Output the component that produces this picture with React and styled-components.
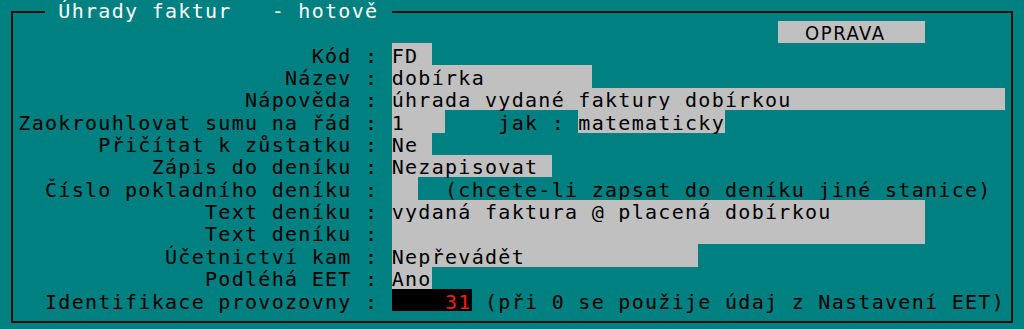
import React from "react";
import styled, { createGlobalStyle } from "styled-components";

// textová obrazovka: mřížka znaků
const CW = 40 / 3;
const RH = 22.36;
const ORIGIN = 5; // x levého okraje sloupce 0
const INNER = 13; // x vnitřní hrany rámu
const cols = (n) => `${n * CW}px`;

const Global = createGlobalStyle`
  html, body {
    margin: 0;
    padding: 0;
    background: #008080;
    overflow: hidden;
  }
`;

const Screen = styled.div`
  width: 1024px;
  height: 329px;
  box-sizing: border-box;
  padding: 10.5px 0 0 11px;
  background: #008080;
  font-family: "DejaVu Sans Mono", "Liberation Mono", monospace;
  font-size: 20px;
  letter-spacing: 1.292px;
  line-height: ${RH}px;
  color: #000;
  white-space: pre;
  overflow: hidden;
`;

const Frame = styled.div`
  position: relative;
  width: 997.5px;
  border: 2px solid #061010;
  padding: 8.26px 0 9.3px;
`;

const Title = styled.div`
  position: absolute;
  left: ${ORIGIN + 3 * CW - INNER}px;
  top: -14.1px;
  width: ${cols(26)};
  height: ${RH}px;
  padding-top: 1.5px;
  box-sizing: border-box;
  background: #008080;
  color: #fff;
`;

const Row = styled.div`
  display: flex;
  height: ${RH}px;
  padding-left: ${(p) => (p.$at ? `${ORIGIN + p.$at * CW - INNER}px` : "0")};
`;

const Cell = styled.span`
  display: block;
  flex: none;
  box-sizing: border-box;
  height: ${RH}px;
  padding-top: 1.5px;
  width: ${(p) => (p.$w ? cols(p.$w) : "auto")};
`;

const Label = styled(Cell)`
  width: ${ORIGIN + 26 * CW - INNER}px;
  text-align: right;
`;

const Field = styled(Cell)`
  background: #c0c0c0;
`;

const Badge = styled(Cell)`
  background: #c0c0c0;
  font-family: "DejaVu Sans Condensed", "Liberation Sans Narrow", "DejaVu Sans Mono", sans-serif;
  letter-spacing: 1.6px;
  padding-left: ${cols(2)};
`;

const Number = styled(Cell)`
  background: #000;
  color: #f01c1c;
  text-align: right;
`;

const Sep = () => <Cell $w={3}> : </Cell>;

const fields = [
  { label: "Kód", w: 3, value: "FD" },
  { label: "Název", w: 15, value: "dobírka" },
  { label: "Nápověda", w: 46, value: "úhrada vydané faktury dobírkou" },
];

export default function App() {
  return (
    <>
      <Global />
      <Screen>
        <Frame>
          <Title> Úhrady faktur   - hotově </Title>
          <Row $at={58}>
            <Badge $w={11}>OPRAVA</Badge>
          </Row>
          {fields.map((f) => (
            <Row key={f.label}>
              <Label>{f.label}</Label>
              <Sep />
              <Field $w={f.w}>{f.value}</Field>
            </Row>
          ))}
          <Row>
            <Label>Zaokrouhlovat sumu na řád</Label>
            <Sep />
            <Field $w={4}>1</Field>
            <Cell $w={10}>    jak : </Cell>
            <Field $w={11}>matematicky</Field>
          </Row>
          <Row>
            <Label>Přičítat k zůstatku</Label>
            <Sep />
            <Field $w={3}>Ne</Field>
          </Row>
          <Row>
            <Label>Zápis do deníku</Label>
            <Sep />
            <Field $w={12}>Nezapisovat</Field>
          </Row>
          <Row>
            <Label>Číslo pokladního deníku</Label>
            <Sep />
            <Field $w={2} />
            <Cell>  (chcete-li zapsat do deníku jiné stanice)</Cell>
          </Row>
          <Row>
            <Label>Text deníku</Label>
            <Sep />
            <Field $w={40}>vydaná faktura @ placená dobírkou</Field>
          </Row>
          <Row>
            <Label>Text deníku</Label>
            <Sep />
            <Field $w={40} />
          </Row>
          <Row>
            <Label>Účetnictví kam</Label>
            <Sep />
            <Field $w={23}>Nepřevádět</Field>
          </Row>
          <Row>
            <Label>Podléhá EET</Label>
            <Sep />
            <Field $w={3}>Ano</Field>
          </Row>
          <Row>
            <Label>Identifikace provozovny</Label>
            <Sep />
            <Number $w={6}>31</Number>
            <Cell> (při 0 se použije údaj z Nastavení EET)</Cell>
          </Row>
        </Frame>
      </Screen>
    </>
  );
}
